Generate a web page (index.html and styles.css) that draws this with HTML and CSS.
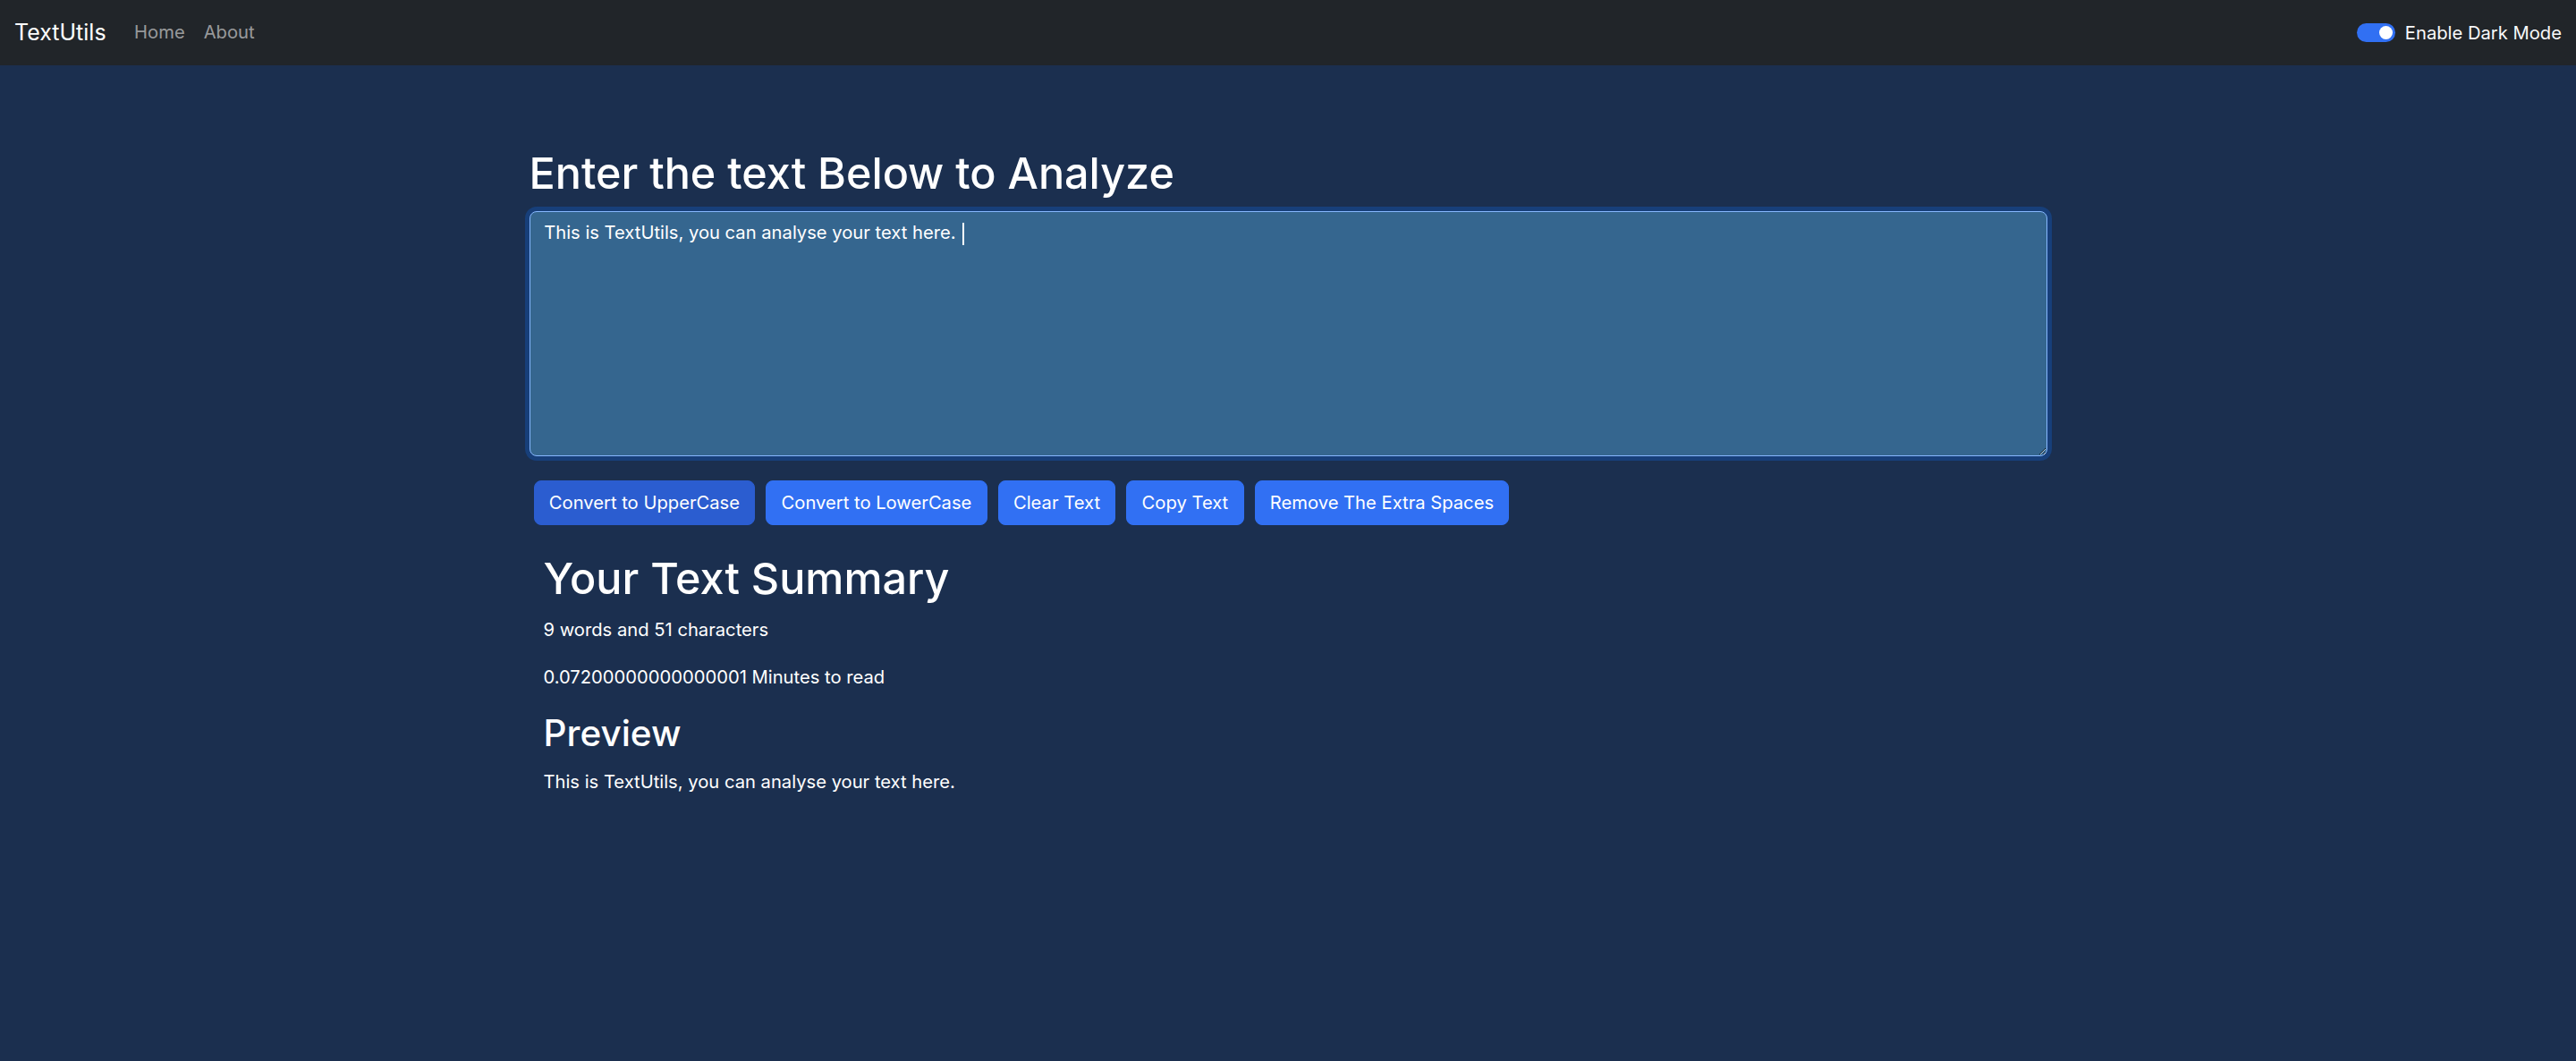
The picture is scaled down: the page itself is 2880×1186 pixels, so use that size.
FILE: index.html
```html
<!DOCTYPE html>
<html lang="en">
<head>
<meta charset="utf-8">
<title>TextUtils</title>
<link rel="stylesheet" href="styles.css">
</head>
<body>
<nav class="navbar">
  <div class="nav-left">
    <a class="brand" href="#">TextUtils</a>
    <ul class="nav-links">
      <li><a class="nav-link" href="#">Home</a></li>
      <li><a class="nav-link" href="#">About</a></li>
    </ul>
  </div>
  <div class="switch-wrap">
    <span class="switch"><span class="knob"></span></span>
    <label class="switch-label">Enable Dark Mode</label>
  </div>
</nav>
<main class="container">
  <section class="form">
    <h1 class="title">Enter the text Below to Analyze</h1>
    <div class="field">
      <textarea class="textbox" id="myBox" rows="8">This is TextUtils, you can analyse your text here. </textarea>
      <span class="caret"></span>
    </div>
    <div class="buttons">
      <button class="btn btn-active">Convert to UpperCase</button>
      <button class="btn">Convert to LowerCase</button>
      <button class="btn">Clear Text</button>
      <button class="btn">Copy Text</button>
      <button class="btn">Remove The Extra Spaces</button>
    </div>
  </section>
  <section class="summary">
    <h1 class="title">Your Text Summary</h1>
    <p class="line">9 words and 51 characters</p>
    <p class="line">0.07200000000000001 Minutes to read</p>
    <h2 class="subtitle">Preview</h2>
    <p class="line">This is TextUtils, you can analyse your text here.</p>
  </section>
</main>
</body>
</html>
```
FILE: styles.css
```css
* { box-sizing: border-box; }
html, body {
  margin: 0;
  padding: 0;
}
body {
  background: #1b2f4f;
  color: #ffffff;
  font-family: Inter, "Noto Sans", "Liberation Sans", sans-serif;
  font-size: 20.2px;
  line-height: 31.4px;
  height: 1186px;
}
.navbar {
  height: 73px;
  background: #212529;
  display: flex;
  align-items: center;
  justify-content: space-between;
  padding: 0 16px;
}
.nav-left {
  display: flex;
  align-items: center;
}
.brand {
  color: #ffffff;
  text-decoration: none;
  font-size: 25px;
  line-height: 39px;
  margin-right: 21px;
}
.nav-links {
  list-style: none;
  display: flex;
  margin: 0;
  padding: 0;
}
.nav-link {
  display: block;
  padding: 9px 10.5px 11px;
  color: rgba(255, 255, 255, 0.55);
  text-decoration: none;
}
.switch-wrap {
  display: flex;
  align-items: center;
  gap: 11px;
}
.switch {
  width: 43px;
  height: 21px;
  border-radius: 11px;
  background: #3170f3;
  display: flex;
  align-items: center;
  justify-content: flex-end;
  padding-right: 3px;
}
.knob {
  width: 15px;
  height: 15px;
  border-radius: 50%;
  background: #ffffff;
}
.switch-label {
  color: #f8f9fa;
}
.container {
  width: 1729px;
  margin: 0 auto;
  padding: 90px 16px 0;
}
.title {
  font-size: 48.5px;
  font-weight: 500;
  line-height: 62px;
  margin: 0 0 10.5px;
}
.field {
  position: relative;
  margin: 0;
}
.caret {
  position: absolute;
  left: 484px;
  top: 13px;
  width: 2px;
  height: 25px;
  background: #ffffff;
}
.textbox {
  display: block;
  width: 100%;
  height: 274px;
  background: #35668f;
  color: #ffffff;
  caret-color: #ffffff;
  border: 1px solid #86b7fe;
  border-radius: 8px;
  box-shadow: 0 0 0 5px rgba(13, 110, 253, 0.25);
  padding: 7.9px 15.7px;
  font-family: inherit;
  font-size: 20.2px;
  line-height: 31.4px;
  outline: none;
}
.buttons {
  display: flex;
  gap: 12px;
  margin: 27px 5px 0;
}
.btn {
  height: 50px;
  padding: 0 16.3px;
  border: 1px solid #3170f3;
  background: #3170f3;
  color: #ffffff;
  font-family: inherit;
  font-size: 20.2px;
  border-radius: 8px;
  display: flex;
  align-items: center;
}
.btn-active {
  background: #2b5dd0;
  border-color: #2b5dd0;
}
.summary {
  margin-top: 29px;
  padding: 0 16px;
}
.title + .line {
  margin-top: 5px;
}
.line {
  margin: 0 0 22px;
}
.subtitle {
  font-size: 40.5px;
  font-weight: 500;
  line-height: 50px;
  margin: 0 0 13px;
}
```
